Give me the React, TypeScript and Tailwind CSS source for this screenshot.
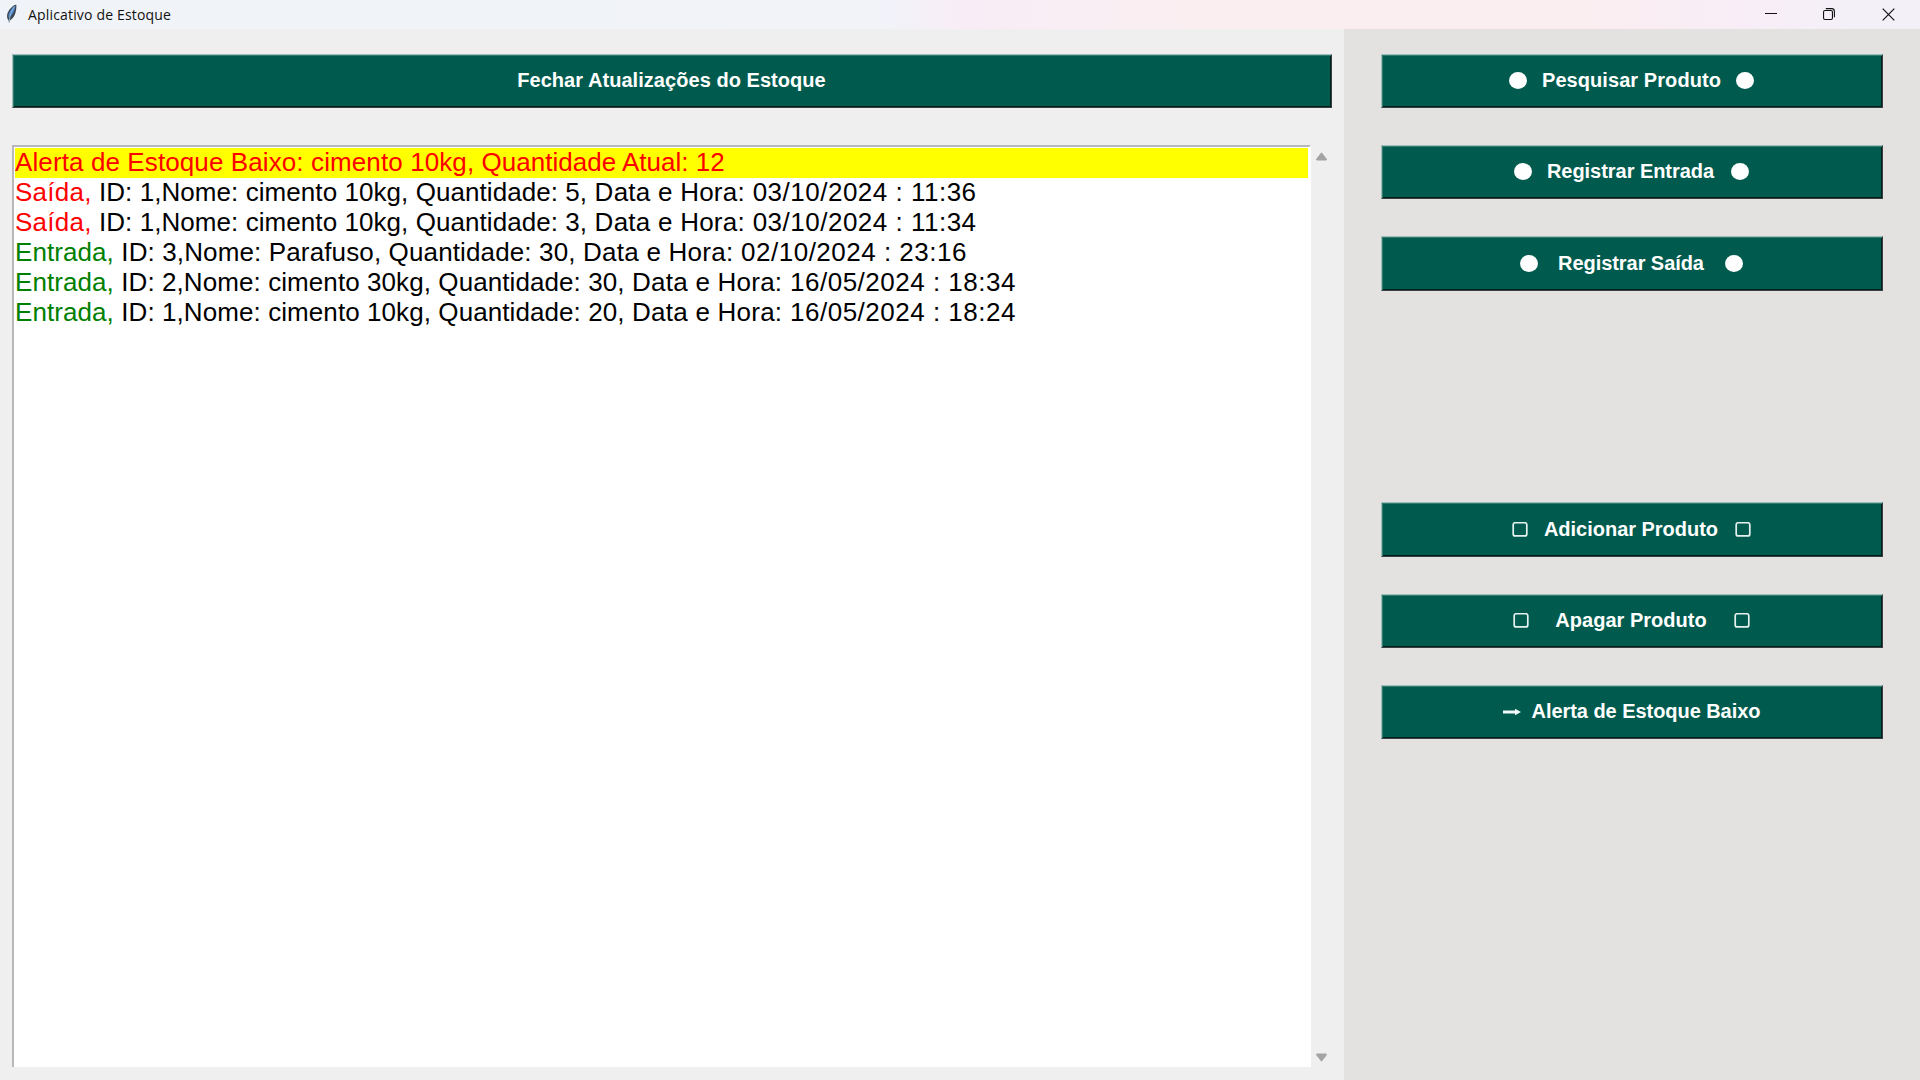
import React from "react";

type Glyph = "dot" | "box" | "arrow";

const bevel =
  "flex items-center justify-center bg-[#005b4e] border border-t-[#9dbfba] border-l-[#9dbfba] border-r-[#3a403f] border-b-[#3a403f] shadow-[inset_1px_1px_0_#327a70,inset_-1px_-1px_0_#001f1b] pb-[2px] text-white text-[20px] leading-[24px] font-bold whitespace-pre";

function Mark({ kind }: { kind: Glyph }) {
  if (kind === "dot")
    return (
      <svg width="18" height="17" viewBox="0 0 18 17" className="mt-px shrink-0">
        <ellipse cx="9" cy="8.5" rx="9" ry="8.4" fill="#fff" />
      </svg>
    );
  if (kind === "box")
    return (
      <svg width="16" height="15" viewBox="0 0 16 15" className="mt-px shrink-0">
        <rect x="1.2" y="0.75" width="13.6" height="13.2" rx="2" fill="none" stroke="#e6f1ef" strokeWidth="1.7" />
      </svg>
    );
  return (
    <svg width="18" height="8" viewBox="0 0 18 8" className="mt-px shrink-0">
      <path d="M0 2.6H12V0.8L18 4L12 7.2V5.4H0Z" fill="#f2f8f7" />
    </svg>
  );
}

function SideButton({
  label,
  kind,
  both = true,
  className,
  textClass,
}: {
  label: string;
  kind: Glyph;
  both?: boolean;
  className: string;
  textClass: string;
}) {
  return (
    <button className={`${bevel} w-[502px] shrink-0 pr-px ${className}`}>
      <Mark kind={kind} />
      <span className={textClass}>{label}</span>
      {both && <Mark kind={kind} />}
    </button>
  );
}

const rows = [
  { tag: "Saída,", out: true, item: " ID: 1,Nome: cimento 10kg, Quantidade: 5,", date: " 03/10/2024 : 11:36", spacing: "tracking-[0.065px]" },
  { tag: "Saída,", out: true, item: " ID: 1,Nome: cimento 10kg, Quantidade: 3,", date: " 03/10/2024 : 11:34", spacing: "tracking-[0.065px]" },
  { tag: "Entrada,", out: false, item: " ID: 3,Nome: Parafuso, Quantidade: 30,", date: " 02/10/2024 : 23:16", spacing: "tracking-[0.13px]" },
  { tag: "Entrada,", out: false, item: " ID: 2,Nome: cimento 30kg, Quantidade: 30,", date: " 16/05/2024 : 18:34", spacing: "tracking-[0.08px]" },
  { tag: "Entrada,", out: false, item: " ID: 1,Nome: cimento 10kg, Quantidade: 20,", date: " 16/05/2024 : 18:24", spacing: "tracking-[0.08px]" },
];

function Feather() {
  return (
    <svg width="12" height="20" viewBox="0 0 12 20" className="shrink-0">
      <path d="M10.2 0.5C6.5 1.5 2.2 6 1.2 10.5C0.8 13 1.2 15 2.6 16.2L3 19L4 16.6C7.4 14.4 9.4 10.6 10 6.6C10.3 4.4 10.6 2.4 10.2 0.5Z" fill="#3b4654" />
      <path d="M9.2 1.6C5.6 4 2.4 8 2.2 13.6C5.8 12 9.2 7 9.2 1.6Z" fill="#4d86c9" />
      <path d="M8.6 2.6C6 6 4 10.4 3.2 17.6" stroke="#a9c6e6" strokeWidth="0.8" fill="none" />
    </svg>
  );
}

function TitleBar() {
  return (
    <header className="flex h-[29px] shrink-0 items-center bg-[linear-gradient(90deg,#f0f3f8_0%,#f1f3f9_46%,#f8edf6_50%,#faeef1_62%,#faeef1_82%,#f9edf6_90%,#f4f0f8_96%,#f4f0f8_100%)] pl-[6px] pr-[2px] pb-px">
      <Feather />
      <span className="ml-[10px] mt-[2px] font-['Open_Sans','Noto_Sans',sans-serif] text-[14px] leading-[20px] tracking-[0.17px] text-[#111]">
        Aplicativo de Estoque
      </span>
      <div className="ml-auto flex items-center">
        <div className="flex w-[58px] justify-center">
          <svg width="12" height="12" viewBox="0 0 12 12"><path d="M0 5.5H12" stroke="#111" /></svg>
        </div>
        <div className="flex w-[58px] justify-center">
          <svg width="12" height="12" viewBox="0 0 12 12" fill="none" stroke="#111" strokeWidth="1.1">
            <rect x="0.55" y="2.55" width="8.9" height="8.9" rx="1.4" />
            <path d="M2.8 0.6H8.6C10.4 0.6 11.4 1.6 11.4 3.4V9.2" />
          </svg>
        </div>
        <div className="flex w-[60px] justify-center">
          <svg width="13" height="13" viewBox="0 0 13 13" stroke="#111" strokeWidth="1.2"><path d="M0.7 0.7L12.3 12.3M12.3 0.7L0.7 12.3" /></svg>
        </div>
      </div>
    </header>
  );
}

export default function App() {
  return (
    <div className="flex h-[1080px] w-[1920px] flex-col overflow-hidden bg-[#efefef] font-['Liberation_Sans',Arial,sans-serif]">
      <TitleBar />
      <div className="flex min-h-0 flex-1">
        <main className="flex w-[1344px] shrink-0 flex-col pl-[12px] pr-[12px] pt-[25px] pb-[13px]">
          <button className={`${bevel} h-[54px] w-full shrink-0 pr-px tracking-[0.05px]`}>Fechar Atualizações do Estoque</button>
          <div className="mt-[37px] flex min-h-0 flex-1">
            <div className="w-[1299px] border-l-2 border-t-2 border-r-2 border-r-white border-l-[#b8b8b8] border-t-[#b8b8b8] bg-white pl-px pt-px pr-[1px]">
              <p className="mr-px h-[30px] w-[1293px] whitespace-pre bg-[#ffff00] text-[26px] leading-[29px] tracking-[0.105px] text-[#ff0000]">
                Alerta de Estoque Baixo: cimento 10kg,<span className="tracking-[0.02px]"> Quantidade Atual: 12</span>
              </p>
              {rows.map((r, i) => (
                <p key={i} className="h-[30px] whitespace-pre text-[26px] leading-[29px] text-black">
                  <span className={r.out ? "tracking-[0.25px] text-[#ff0000]" : "tracking-[0.08px] text-[#008000]"}>{r.tag}</span>
                  <span className={r.spacing}>{r.item}</span>
                  <span className="tracking-[0.24px]"> Data e Hora:</span>
                  <span className="tracking-[0.5px]">{r.date}</span>
                </p>
              ))}
            </div>
            <div className="ml-[5px] flex flex-col justify-between pt-[7px] pb-[5px]">
              <svg width="11" height="9" viewBox="0 0 11 9"><path d="M5.5 0.8L10.3 7V8H0.7V7Z" fill="#a3a3a3" stroke="#a3a3a3" strokeLinejoin="round" /></svg>
              <svg width="11" height="9" viewBox="0 0 11 9"><path d="M5.5 8.2L10.3 2V1H0.7V2Z" fill="#a3a3a3" stroke="#a3a3a3" strokeLinejoin="round" /></svg>
            </div>
          </div>
        </main>
        <aside className="flex flex-1 flex-col bg-[#e3e2e0] pl-[37px] pt-[25px]">
          <SideButton label="Pesquisar Produto" kind="dot" className="h-[54px]" textClass="ml-[15px] mr-[15px] tracking-[0.07px]" />
          <SideButton label="Registrar Entrada" kind="dot" className="mt-[37px] h-[54px]" textClass="ml-[15px] mr-[17px] tracking-[-0.04px]" />
          <SideButton label="Registrar Saída" kind="dot" className="mt-[37px] h-[55px]" textClass="ml-[20px] mr-[21px] tracking-[-0.06px]" />
          <SideButton label="Adicionar Produto" kind="box" className="mt-[211px] h-[55px]" textClass="ml-[16px] mr-[17px] tracking-[-0.02px]" />
          <SideButton label="Apagar Produto" kind="box" className="mt-[37px] h-[54px]" textClass="ml-[26px] mr-[27px] tracking-[0.02px]" />
          <SideButton label="Alerta de Estoque Baixo" kind="arrow" both={false} className="mt-[37px] h-[54px]" textClass="ml-[11px] tracking-[-0.05px]" />
        </aside>
      </div>
    </div>
  );
}
